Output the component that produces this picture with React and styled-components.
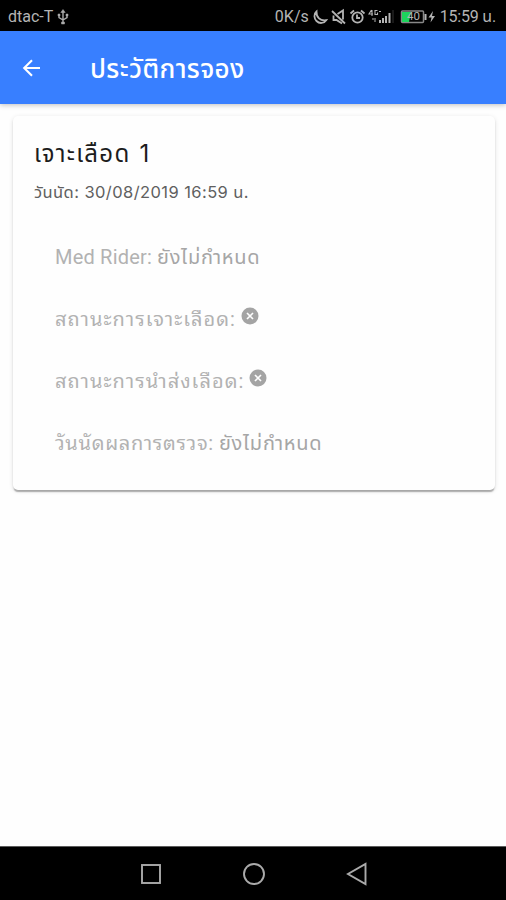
import React from "react";
import styled, { createGlobalStyle } from "styled-components";

const GlobalStyle = createGlobalStyle`
  * {
    box-sizing: border-box;
  }

  body {
    margin: 0;
    background: #fefefe;
    font-family: Roboto, "Noto Sans Thai", "Noto Sans", sans-serif;
  }
`;

const Screen = styled.div`
  display: flex;
  flex-direction: column;
  height: 900px;
  overflow: hidden;
`;

const StatusBar = styled.div`
  display: flex;
  align-items: center;
  justify-content: space-between;
  height: 31px;
  padding: 2px 10px 0 8px;
  background: #000;
  color: #b4b4b4;
  font-size: 16px;
  line-height: 20px;
  white-space: nowrap;
`;

const StatusGroup = styled.div`
  display: flex;
  align-items: center;

  svg {
    display: block;
    margin-left: ${(p) => p.$gap || 0}px;
  }
`;

const StatusText = styled.span`
  margin-left: ${(p) => p.$left || 0}px;
  letter-spacing: ${(p) => p.$spacing || 0}px;
`;

const Header = styled.header`
  display: flex;
  align-items: center;
  height: 73px;
  padding: 0 20px;
  background: #387fff;
  box-shadow: 0 1px 5px rgba(0, 0, 0, 0.25);
  color: #fff;
`;

const BackButton = styled.button`
  display: flex;
  width: 70px;
  padding: 0;
  border: 0;
  background: none;
  color: inherit;
`;

const HeaderTitle = styled.h1`
  margin: 3px 0 0;
  font-size: 26px;
  font-weight: 500;
  line-height: 36px;
  letter-spacing: 0.4px;
  white-space: nowrap;
`;

const Content = styled.main`
  flex: 1;
  padding: 12px 11px 0 13px;
`;

const Card = styled.section`
  height: 374px;
  padding: 20px 21px;
  border-radius: 5px;
  background: #fefefe;
  box-shadow: 0 3px 1px -1px rgba(0, 0, 0, 0.2), 0 2px 2px 0 rgba(0, 0, 0, 0.12),
    0 1px 5px 0 rgba(0, 0, 0, 0.1);
`;

const CardTitle = styled.h2`
  margin: 0;
  color: #1c1c1c;
  font-family: Inter, "Noto Sans Thai", sans-serif;
  font-size: 24px;
  font-weight: 400;
  line-height: 36px;
  letter-spacing: 1.3px;
  word-spacing: 1px;
  white-space: nowrap;
`;

const CardDate = styled.p`
  margin: 6px 0 0;
  color: #606060;
  font-family: Inter, "Noto Sans Thai", sans-serif;
  font-size: 16.5px;
  line-height: 28px;
  letter-spacing: 0.42px;
  white-space: nowrap;
`;

const List = styled.div`
  padding: 21px 0 0 21px;
`;

const Row = styled.div`
  display: flex;
  align-items: baseline;
  height: 62px;
  color: #b2b2b2;
  font-size: 20px;
  line-height: 60px;
  white-space: nowrap;
`;

const RowLabel = styled.span`
  font-family: Roboto, "Noto Sans Thai Looped", Loma, Waree, Garuda, "Noto Sans Thai", sans-serif;
  letter-spacing: ${(p) => p.$spacing || 0}px;
`;

const RowValue = styled.span`
  margin-left: 5px;
  color: #a6a6a6;
  letter-spacing: 0.75px;
`;

const NavBar = styled.nav`
  display: flex;
  align-items: center;
  justify-content: center;
  gap: 79px;
  height: 54px;
  padding-left: 1px;
  background: #000;
  border-top: 1px solid #5c5c5c;
`;

const UsbIcon = () => (
  <svg width="12" height="16" viewBox="0 0 12 16" fill="none" stroke="#aaa" strokeWidth="1.4">
    <path d="M6 2v11M2 6v2.5l4 2.5 4-2.5V6" />
    <path d="M3.8 3.5 6 .5l2.2 3zM4.5 13h3v2h-3zM1 5h2v2H1zM9 5h2v2H9z" fill="#aaa" strokeWidth=".5" />
  </svg>
);

const StatusIcons = () => (
  <svg width="125" height="20" viewBox="312 6 125 20" fill="none" stroke="#b4b4b4" strokeWidth="1.8">
    <path d="M316.5 10.5c-3 2.5-2.5 7 0 9.5 3 3 7.5 2.5 9.7-.8-6 1-10-3-9.7-8.7z" />
    <path d="M332 10l13 12.5M333.5 14.5v4.5h3l5.5 3.5M337.5 13l5.5-3.5v9" />
    <circle cx="357.5" cy="16.5" r="5.2" />
    <path d="M357 13.5v3.5h3M350.5 12.5l3.5-3M364.5 12.5l-3.5-3" />
    <path d="M371.5 9l-2.5 4h4M372 9v6M377.5 9.5h-2.5v4h2.5v-2M379 10.5h2M372 18h4M374 20h2" strokeWidth="1.1" />
    <path d="M380 22v-3M383 22v-5M386 22v-7M389.5 22V12" strokeWidth="2" />
    <path d="M393 9v13" stroke="#333" strokeWidth="1" />
    <rect x="401.5" y="10" width="22" height="11.5" rx="1" stroke="#888" strokeWidth="1.5" />
    <path d="M402 11h9l-2 10h-7z" fill="#1dd45c" stroke="none" />
    <path d="M425.5 13v6" strokeWidth="2" />
    <text x="407" y="19" fill="#b4b4b4" stroke="none" fontSize="11.5" fontFamily="Roboto">
      40
    </text>
    <path d="M433 10l-4.5 6.5h3l-1 5 4.5-6.5h-3z" fill="#b4b4b4" stroke="none" />
  </svg>
);

const BackArrow = () => (
  <svg width="24" height="20" viewBox="0 0 24 20" fill="none" stroke="currentColor" strokeWidth="2.1">
    <path d="M20 10H4.5M12 2.2 4.2 10l7.8 7.8" />
  </svg>
);

const CloseSvg = styled.svg`
  flex: none;
  align-self: center;
  margin: -9px 0 0 5px;
`;

const CloseIcon = () => (
  <CloseSvg width="18" height="18" viewBox="0 0 18 18">
    <circle cx="9" cy="9" r="8.5" fill="#a4a4a4" />
    <path d="M6 6l6 6M12 6l-6 6" stroke="#fefefe" strokeWidth="1.7" />
  </CloseSvg>
);

const rows = [
  { label: "Med Rider:", value: "ยังไม่กำหนด", spacing: 0.2 },
  { label: "สถานะการเจาะเลือด:", spacing: 1.05 },
  { label: "สถานะการนำส่งเลือด:", spacing: 1.05 },
  { label: "วันนัดผลการตรวจ:", value: "ยังไม่กำหนด", spacing: 0.7 },
];

export default function App() {
  return (
    <Screen>
      <GlobalStyle />
      <StatusBar>
        <StatusGroup $gap={4}>
          <StatusText>dtac-T</StatusText>
          <UsbIcon />
        </StatusGroup>
        <StatusGroup $gap={3}>
          <StatusText>0K/s</StatusText>
          <StatusIcons />
          <StatusText $left={3} $spacing={-0.2}>
            15:59 น.
          </StatusText>
        </StatusGroup>
      </StatusBar>

      <Header>
        <BackButton aria-label="Back">
          <BackArrow />
        </BackButton>
        <HeaderTitle>ประวัติการจอง</HeaderTitle>
      </Header>

      <Content>
        <Card>
          <CardTitle>เจาะเลือด 1</CardTitle>
          <CardDate>วันนัด: 30/08/2019 16:59 น.</CardDate>
          <List>
            {rows.map((row) => (
              <Row key={row.label}>
                <RowLabel $spacing={row.spacing}>{row.label}</RowLabel>
                {row.value ? <RowValue>{row.value}</RowValue> : <CloseIcon />}
              </Row>
            ))}
          </List>
        </Card>
      </Content>

      <NavBar>
        <svg width="24" height="24" viewBox="0 0 24 24" fill="none" stroke="#aaa" strokeWidth="1.9">
          <rect x="3" y="3" width="18" height="18" />
        </svg>
        <svg width="24" height="24" viewBox="0 0 24 24" fill="none" stroke="#aaa" strokeWidth="1.9">
          <circle cx="12" cy="12" r="10" />
        </svg>
        <svg width="24" height="24" viewBox="0 0 24 24" fill="none" stroke="#aaa" strokeWidth="1.9">
          <path d="M20.5 2v20L3 12z" />
        </svg>
      </NavBar>
    </Screen>
  );
}
